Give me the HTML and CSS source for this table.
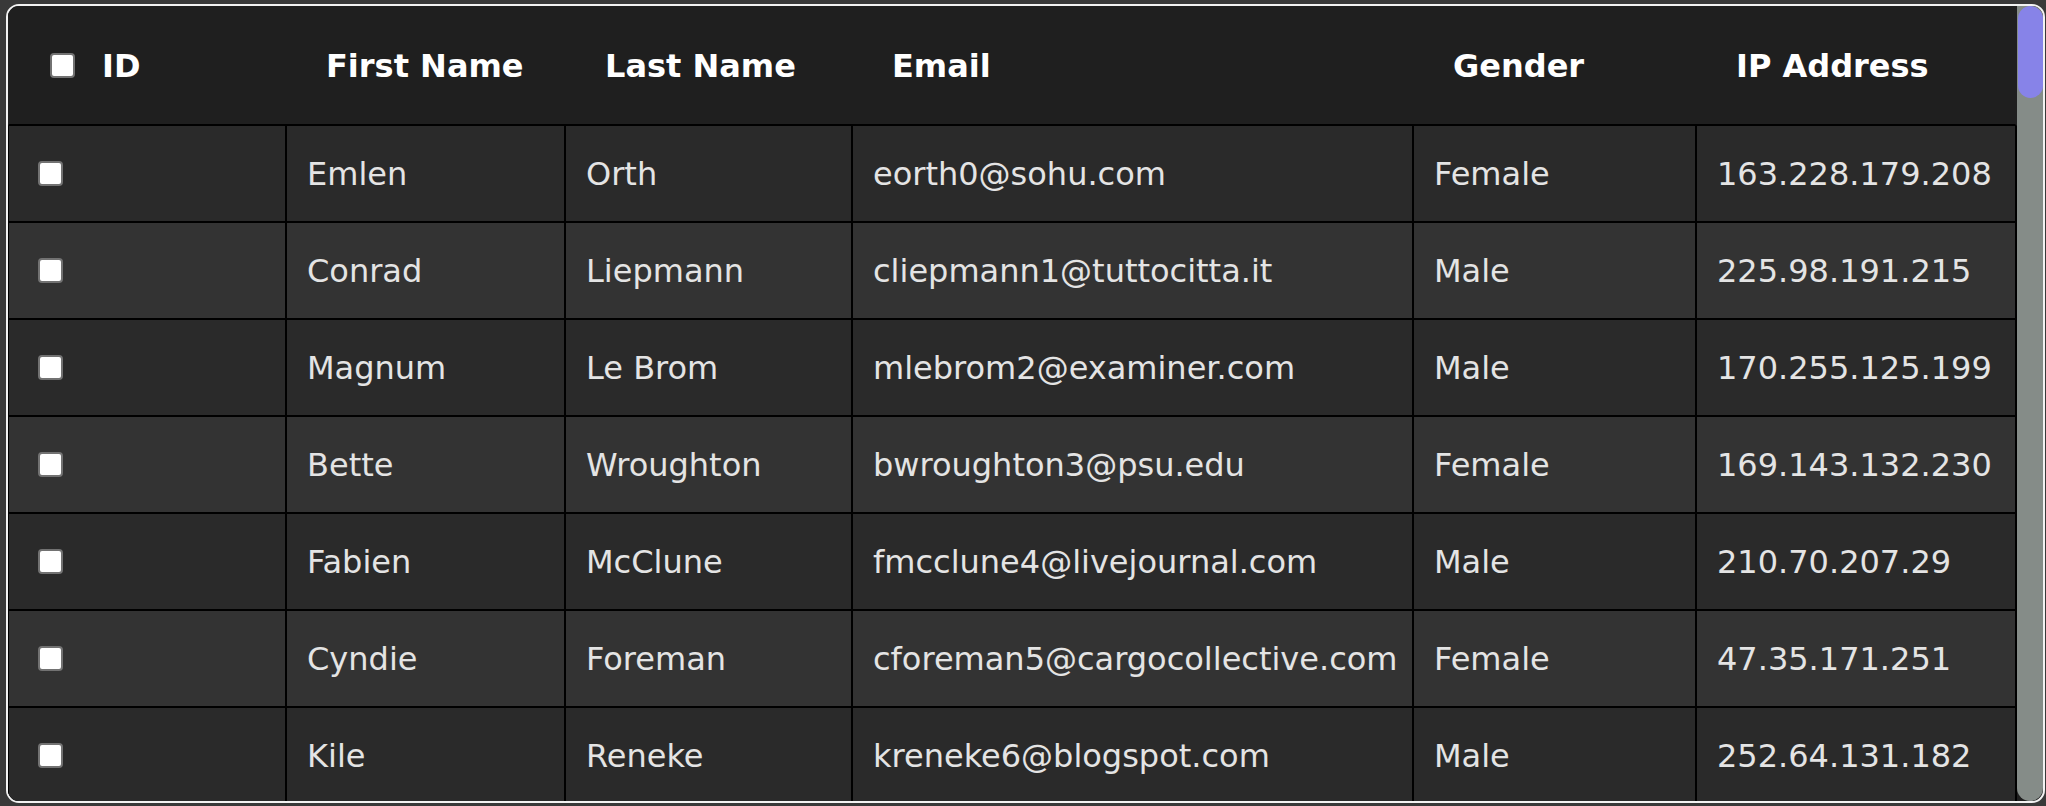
FILE: index.html
```html
<!DOCTYPE html>
<html lang="en">
<head>
<meta charset="utf-8">
<title>Users</title>
<link rel="stylesheet" href="styles.css">
</head>
<body>
<div class="frame">
  <div class="table">
    <div class="row head">
      <div class="hcell hcell-id"><input type="checkbox" class="check"><span>ID</span></div>
      <div class="hcell">First Name</div>
      <div class="hcell">Last Name</div>
      <div class="hcell">Email</div>
      <div class="hcell">Gender</div>
      <div class="hcell">IP Address</div>
    </div>
    <div class="row odd">
      <div class="cell cell-id"><input type="checkbox" class="check"></div>
      <div class="cell">Emlen</div><div class="cell">Orth</div><div class="cell">eorth0@sohu.com</div><div class="cell">Female</div><div class="cell">163.228.179.208</div>
    </div>
    <div class="row even">
      <div class="cell cell-id"><input type="checkbox" class="check"></div>
      <div class="cell">Conrad</div><div class="cell">Liepmann</div><div class="cell">cliepmann1@tuttocitta.it</div><div class="cell">Male</div><div class="cell">225.98.191.215</div>
    </div>
    <div class="row odd">
      <div class="cell cell-id"><input type="checkbox" class="check"></div>
      <div class="cell">Magnum</div><div class="cell">Le Brom</div><div class="cell">mlebrom2@examiner.com</div><div class="cell">Male</div><div class="cell">170.255.125.199</div>
    </div>
    <div class="row even">
      <div class="cell cell-id"><input type="checkbox" class="check"></div>
      <div class="cell">Bette</div><div class="cell">Wroughton</div><div class="cell">bwroughton3@psu.edu</div><div class="cell">Female</div><div class="cell">169.143.132.230</div>
    </div>
    <div class="row odd">
      <div class="cell cell-id"><input type="checkbox" class="check"></div>
      <div class="cell">Fabien</div><div class="cell">McClune</div><div class="cell">fmcclune4@livejournal.com</div><div class="cell">Male</div><div class="cell">210.70.207.29</div>
    </div>
    <div class="row even">
      <div class="cell cell-id"><input type="checkbox" class="check"></div>
      <div class="cell">Cyndie</div><div class="cell">Foreman</div><div class="cell">cforeman5@cargocollective.com</div><div class="cell">Female</div><div class="cell">47.35.171.251</div>
    </div>
    <div class="row odd">
      <div class="cell cell-id"><input type="checkbox" class="check"></div>
      <div class="cell">Kile</div><div class="cell">Reneke</div><div class="cell">kreneke6@blogspot.com</div><div class="cell">Male</div><div class="cell">252.64.131.182</div>
    </div>
  </div>
  <div class="scrollbar"><div class="thumb"></div></div>
</div>
</body>
</html>
```
FILE: styles.css
```css
* { box-sizing: border-box; }
html, body { margin: 0; padding: 0; }
body {
  background: #393939;
  width: 2046px;
  height: 806px;
  overflow: hidden;
  font-family: "DejaVu Sans", Verdana, sans-serif;
}
.frame {
  margin: 4px 0 0 6px;
  width: 2039px;
  height: 799px;
  border: 2px solid #f2f2f2;
  border-radius: 13px;
  overflow: hidden;
  display: flex;
  background: #1f1f1f;
}
.table {
  flex: 1;
  min-width: 0;
  display: flex;
  flex-direction: column;
}
.row {
  flex: none;
  display: grid;
  grid-template-columns: 276px 277px 285px 559px 281px 318px;
  column-gap: 2px;
  background: #000;
  border-left: 1px solid #000;
  border-right: 2px solid #000;
  border-bottom: 2px solid #000;
  height: 97px;
}
.row.head {
  height: 120px;
  background: #1f1f1f;
  border-left-color: #1f1f1f;
  border-right-color: #1f1f1f;
}
.hcell {
  display: flex;
  align-items: center;
  padding: 2px 0 0 39px;
  color: #fff;
  font-weight: bold;
  font-size: 32px;
  white-space: nowrap;
}
.hcell-id { padding-left: 41px; gap: 27px; }
.hcell-id .check { margin-top: -2px; }
.cell {
  display: flex;
  align-items: center;
  padding-left: 20px;
  color: #e4e4e4;
  font-size: 32px;
  white-space: nowrap;
  overflow: hidden;
}
.row.odd .cell { background: #2a2a2a; }
.row.even .cell { background: #333333; }
.cell.cell-id { padding-left: 29px; }
.check {
  appearance: none;
  -webkit-appearance: none;
  margin: 0;
  width: 25px;
  height: 25px;
  background: #fff;
  border: 2px solid #727272;
  border-radius: 4px;
  flex: none;
}
.scrollbar {
  flex: none;
  width: 26px;
  background: #858c88;
  border-radius: 0 0 13px 13px;
  display: flex;
  flex-direction: column;
  align-items: flex-end;
}
.thumb {
  width: 25px;
  height: 92px;
  background: #8783e8;
  border-radius: 13px;
}
```
